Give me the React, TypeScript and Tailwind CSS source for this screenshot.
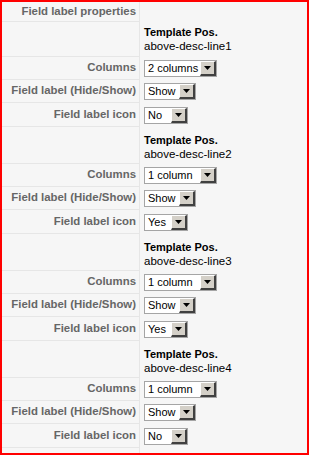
import React from "react";

const font = { fontFamily: '"Liberation Sans", Arial, sans-serif' };

function Select({ value, w }: { value: string; w: string }) {
  return (
    <div className={`flex h-[17px] ${w} border border-[#a5a5a5] bg-white`}>
      <span className="flex-1 pl-[3px] text-[11px] leading-[15px] text-black whitespace-nowrap overflow-hidden">
        {value}
      </span>
      <div className="flex h-full w-[16px] items-center justify-center border-t border-l border-t-white border-l-white border-r-2 border-b-2 border-r-[#404040] border-b-[#404040] bg-[#d4d0c8]">
        <svg width="7" height="4" viewBox="0 0 7 4">
          <polygon points="0,0 7,0 3.5,4" fill="#000" />
        </svg>
      </div>
    </div>
  );
}

function Row({
  label,
  h,
  children,
}: {
  label?: string;
  h: string;
  children?: React.ReactNode;
}) {
  return (
    <div className={`flex ${h}`}>
      <div className="flex w-[138px] shrink-0 items-center justify-end border-r border-b border-[#e6e6e6] pr-[3px] text-[11.4px] font-bold text-[#666666] whitespace-nowrap">
        {label}
      </div>
      <div className="flex flex-1 items-center pl-[4px]">{children}</div>
    </div>
  );
}

function TemplateRow({ n, h, pt }: { n: number; h: string; pt: string }) {
  return (
    <div className={`flex ${h}`}>
      <div className="w-[138px] shrink-0 border-r border-b border-[#e6e6e6]" />
      <div className={`flex-1 pl-[4px] ${pt} leading-[14px] text-black`}>
        <div className="text-[11px] font-bold">Template Pos.</div>
        <div className="text-[11.5px]">above-desc-line{n}</div>
      </div>
    </div>
  );
}

const blocks = [
  { n: 1, cols: "2 columns", show: "Show", icon: "No" },
  { n: 2, cols: "1 column", show: "Show", icon: "Yes" },
  { n: 3, cols: "1 column", show: "Show", icon: "Yes" },
  { n: 4, cols: "1 column", show: "Show", icon: "No" },
];

export default function App() {
  return (
    <div
      className="h-[455px] w-[309px] overflow-hidden border-2 border-[#ff0000] bg-[#f6f6f6]"
      style={font}
    >
      <Row label="Field label properties" h="h-[20px]" />
      {blocks.map((b, i) => (
        <React.Fragment key={b.n}>
          <TemplateRow
            n={b.n}
            h={i === 0 ? "h-[35px]" : "h-[37px]"}
            pt={i === 0 ? "pt-[3px]" : "pt-[6px]"}
          />
          <Row label="Columns" h="h-[23px]">
            <Select value={b.cols} w="w-[73px]" />
          </Row>
          <Row label="Field label (Hide/Show)" h="h-[23px]">
            <Select value={b.show} w="w-[52px]" />
          </Row>
          <Row label="Field label icon" h="h-[24px]">
            <Select value={b.icon} w="w-[44px]" />
          </Row>
        </React.Fragment>
      ))}
      <Row h="h-[24px]" />
    </div>
  );
}
